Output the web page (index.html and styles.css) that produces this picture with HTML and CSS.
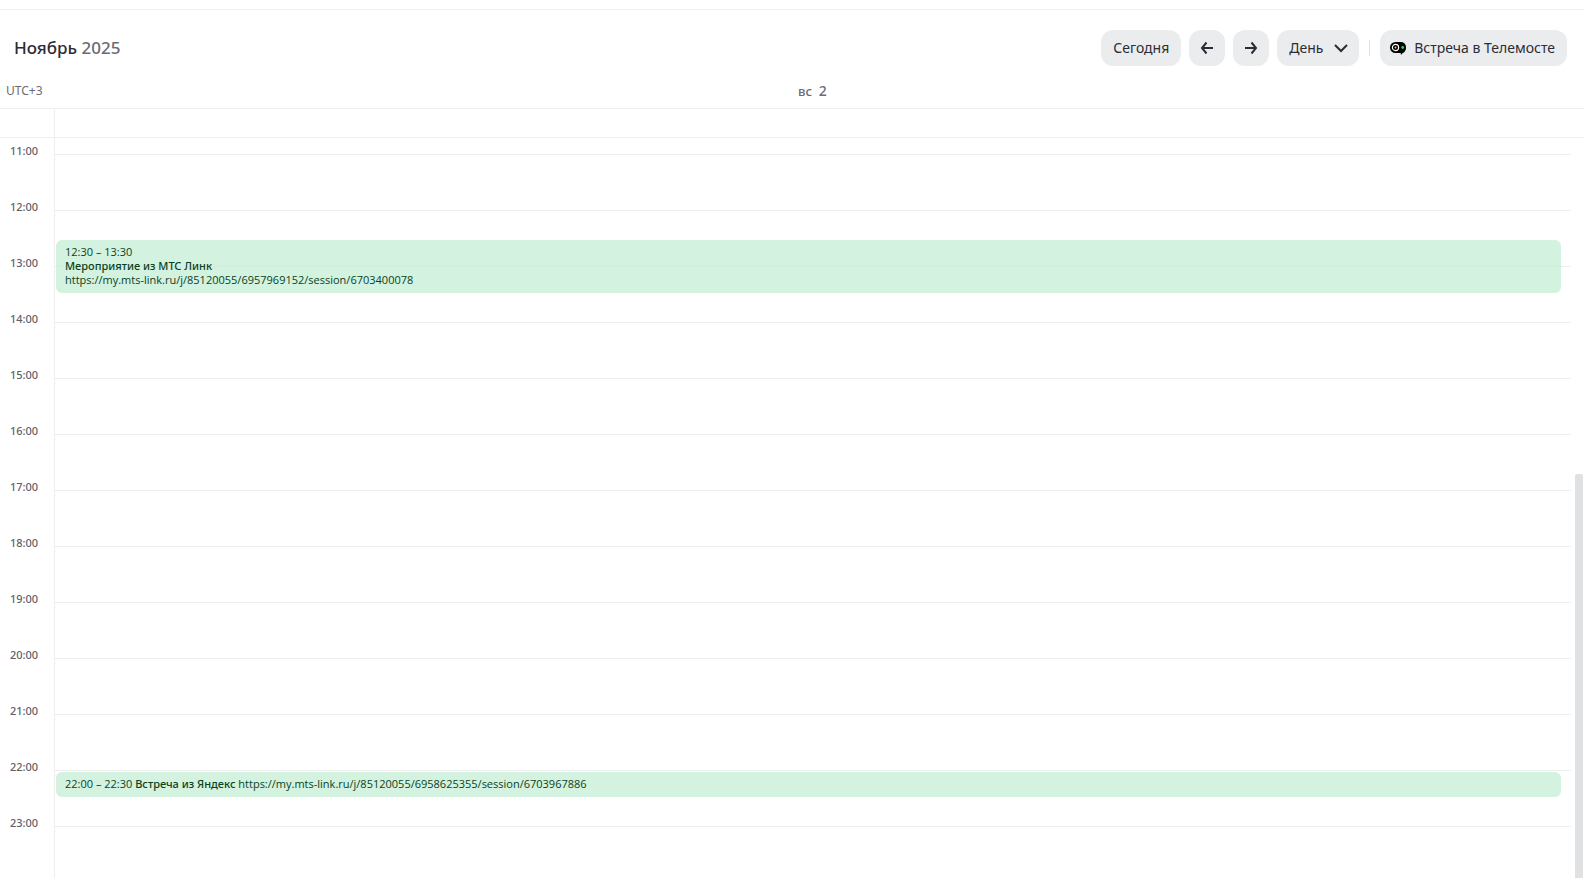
FILE: index.html
```
<!DOCTYPE html>
<html lang="ru">
<head>
    <meta charset="UTF-8">
    <title>Календарь</title>
    <meta name="viewport" content="width=device-width, initial-scale=1" />

    <link rel="stylesheet" href="styles.css">
</head>
<body>
    <header class="header">
        <h1 class="title">Ноябрь <span class="year">2025</span></h1>
        <div class="controls">
            <button class="btn" type="button">Сегодня</button>
            <button class="btn btnIcon" type="button" aria-label="Назад">
                <svg width="16" height="16" viewBox="0 0 16 16"><path d="M14 8H3M7.500 2.500L3 8l4.500 5.500"/></svg>
            </button>
            <button class="btn btnIcon" type="button" aria-label="Вперёд">
                <svg width="16" height="16" viewBox="0 0 16 16"><path d="M2 8h11M8.500 2.500L13 8l-4.500 5.500"/></svg>
            </button>
            <div class="selectWrap">
                <select class="btn select" aria-label="Вид">
                    <option>День</option>
                </select>
                <svg class="chevron" width="16" height="16" viewBox="0 0 16 16"><path d="M2 5l6 6 6-6"/></svg>
            </div>
            <span class="divider"></span>
            <button class="btn btnMeet" type="button">
                <svg class="logo" width="16" height="16" viewBox="0 0 16 16">
                    <path class="logoBody" d="M5.500 2H11a5 5 0 0 1 5 5v1c0 2.600-1.500 4.500-3.500 5.200L10.800 15v-2H5.500a5.500 5.500 0 0 1 0-11z"/>
                    <circle class="logoRing" cx="5.500" cy="7.500" r="3.100"/>
                    <circle class="logoLens" cx="5.500" cy="7.500" r="1"/>
                    <circle class="logoDot" cx="12.700" cy="7.500" r="1.400"/>
                </svg>
                Встреча в Телемосте
            </button>
        </div>
    </header>

    <div class="days">
        <span class="zone">UTC+3</span>
        <span class="day">вс&nbsp; <span class="dayNumber">2</span></span>
    </div>
    <div class="allDay">
        <div class="allDayCell"></div>
    </div>

    <main class="schedule">
        <div class="hours">
            <span>11:00</span>
            <span>12:00</span>
            <span>13:00</span>
            <span>14:00</span>
            <span>15:00</span>
            <span>16:00</span>
            <span>17:00</span>
            <span>18:00</span>
            <span>19:00</span>
            <span>20:00</span>
            <span>21:00</span>
            <span>22:00</span>
            <span>23:00</span>
        </div>
        <div class="column">
            <div class="cell"></div>
            <div class="cell"></div>
            <div class="cell"></div>
            <div class="cell"></div>
            <div class="cell"></div>
            <div class="cell"></div>
            <div class="cell"></div>
            <div class="cell"></div>
            <div class="cell"></div>
            <div class="cell"></div>
            <div class="cell"></div>
            <div class="cell"></div>
            <div class="cell"></div>
            <article class="event" style="--start: 12.5; --length: 1">
                <div>12:30 – 13:30</div>
                <div class="eventName">Мероприятие из МТС Линк</div>
                <div>https://my.mts-link.ru/j/85120055/6957969152/session/6703400078</div>
            </article>
            <article class="event" style="--start: 22; --length: 0.5">
                22:00 – 22:30 <span class="eventName">Встреча из Яндекс</span> https://my.mts-link.ru/j/85120055/6958625355/session/6703967886
            </article>
        </div>
        <div class="scrollbar">
            <div class="thumb"></div>
        </div>
    </main>
</body>
</html>
```
FILE: styles.css
```
* {
    box-sizing: border-box;
}

body {
    margin: 0;
    padding-top: 9px;
    height: 100vh;
    display: flex;
    flex-direction: column;
    overflow: hidden;
    background: #fff;
    color: #2c2c36;
    font-family: "Noto Sans", "Open Sans", sans-serif;
}

.header {
    display: flex;
    align-items: center;
    justify-content: space-between;
    padding: 20px 17px 6px 14px;
    border-top: 1px solid #eeeeef;
}

.title {
    margin: 0;
    font-size: 17px;
    line-height: 24px;
    font-weight: 500;
}

.year {
    color: #6b6b76;
}

.controls {
    display: flex;
    align-items: center;
    gap: 8px;
}

.btn {
    height: 36px;
    padding: 0 12px;
    border: 0;
    border-radius: 12px;
    background: #ebecee;
    color: #2c2c36;
    font-family: inherit;
    font-size: 14px;
    line-height: 20px;
}

.btn svg,
.chevron {
    fill: none;
    stroke: #2c2c36;
    stroke-width: 2;
}

.btnIcon {
    display: flex;
    align-items: center;
    justify-content: center;
    width: 36px;
    padding: 0;
}

.selectWrap {
    display: grid;
    align-items: center;
}

.select {
    grid-area: 1 / 1;
    appearance: none;
    padding-right: 35px;
}

.chevron {
    grid-area: 1 / 1;
    justify-self: end;
    margin-right: 10px;
    pointer-events: none;
}

.divider {
    width: 1px;
    height: 16px;
    margin: 0 2px;
    background: #dedfe2;
}

.btnMeet {
    display: flex;
    align-items: center;
    gap: 8px;
    padding-left: 10px;
}

.btn .logo {
    stroke: none;
}

.logo .logoBody {
    fill: #000;
}

.logo .logoRing {
    stroke: #fff;
    stroke-width: 1.2;
}

.logo .logoLens {
    fill: #c8c8cc;
}

.logo .logoDot {
    fill: #2bd951;
}

.days {
    display: grid;
    grid-template-columns: 54px 1fr;
    align-items: center;
    height: 36px;
    padding: 2px 13px 0 0;
    color: #6b6b76;
    line-height: 18px;
}

.zone {
    padding-left: 6px;
    font-size: 12px;
}

.day {
    text-align: center;
    font-size: 13px;
    font-weight: 500;
}

.dayNumber {
    font-size: 14px;
}

.allDay {
    display: grid;
    grid-template-columns: 54px 1fr;
    height: 30px;
    border-top: 1px solid #eeeeef;
    border-bottom: 1px solid #eeeeef;
}

.allDayCell {
    grid-column: 2;
    border-left: 1px solid #eeeeef;
}

.schedule {
    display: grid;
    grid-template-columns: 54px 1fr 13px;
    flex: 1;
    min-height: 0;
}

.hours {
    display: grid;
    grid-auto-rows: 56px;
    min-height: 0;
    padding: 5px 0 0 10px;
    color: #5f5f69;
    font-size: 11px;
    line-height: 16px;
    font-weight: 500;
}

/* 16px of the 10:00 row stay visible above the first line */
.column {
    position: relative;
    min-height: 0;
    padding-top: 16px;
    border-left: 1px solid #eeeeef;
}

.cell {
    height: 56px;
    border-top: 1px solid #eeeeef;
}

.event {
    position: absolute;
    top: calc((var(--start) - 11) * 56px + 18px);
    left: 1px;
    right: 10px;
    height: calc(var(--length) * 56px - 3px);
    padding: 5px 9px;
    border-radius: 6px;
    background: rgba(196, 237, 212, 0.75);
    color: #0a421e;
    font-family: "Open Sans", "Noto Sans", sans-serif;
    font-size: 11px;
    line-height: 14px;
    overflow: hidden;
    white-space: nowrap;
}

.eventName {
    font-family: "Noto Sans", "Open Sans", sans-serif;
    font-weight: 500;
}

.scrollbar {
    display: flex;
    flex-direction: column;
    justify-content: flex-end;
    min-height: 0;
    padding: 0 1px 0 4px;
}

.thumb {
    height: 54.6%;
    border-radius: 2px 2px 0 0;
    background: #e0e1e3;
}
```
